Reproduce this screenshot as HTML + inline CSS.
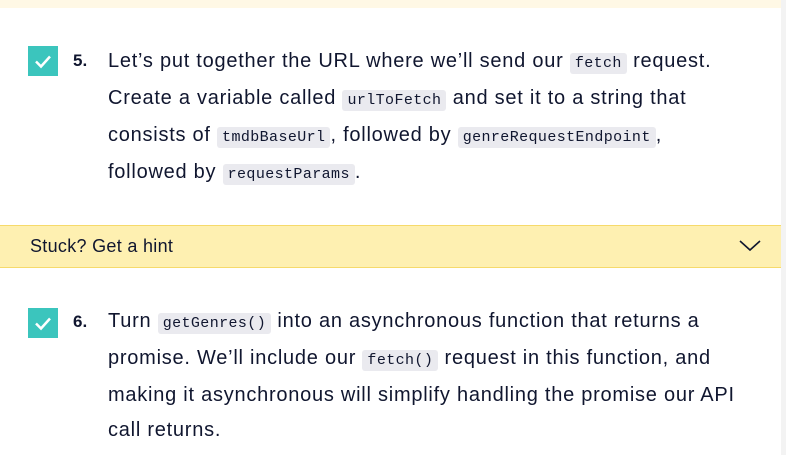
<!DOCTYPE html>
<html><head><meta charset="utf-8"><style>
*{margin:0;padding:0;box-sizing:border-box}
body{width:786px;height:455px;background:#fff;position:relative;overflow:hidden;font-family:"Liberation Sans",Arial,sans-serif;color:#10162f}
.top{position:absolute;left:0;top:0;width:781px;height:8px;background:#fff8e5}
.edge{position:absolute;right:0;top:0;width:5px;height:455px;background:#f3f3f3}
.chk{position:absolute;left:28px;width:30px;height:30px;background:#3bc5bd}
.chk svg{position:absolute;left:0;top:0}
.num{position:absolute;left:73px;font-weight:bold;font-size:17px}
.txt{position:absolute;left:108px;width:680px;font-size:20px;letter-spacing:0.75px;line-height:35px;white-space:nowrap}
code{font-family:"Liberation Mono",monospace;font-size:15px;letter-spacing:0.4px;background:#eaeaef;border-radius:3px;padding:2px 5px}
.hint{position:absolute;left:0;top:225px;width:781px;height:43px;background:#fef0b1;border-top:1px solid #f6da6b;border-bottom:1px solid #f6da6b;font-size:18px;letter-spacing:0.3px;line-height:41px;padding-left:30px}
.hint svg{position:absolute;right:20px;top:14px}
</style></head><body>
<div class="top"></div><div class="edge"></div>
<div class="chk" style="top:46px"><svg width="30" height="30"><path d="M8 15.5l5 5 9-10" stroke="#fff" stroke-width="2.5" fill="none"/></svg></div>
<div class="num" style="top:51px">5.</div>
<div class="txt" style="top:44px">Let’s put together the URL where we’ll send our <code>fetch</code> request.<br>Create a variable called <code>urlToFetch</code> and set it to a string that<br>consists of <code>tmdbBaseUrl</code>, followed by <code>genreRequestEndpoint</code>,<br>followed by <code>requestParams</code>.</div>
<div class="hint">Stuck? Get a hint<svg width="22" height="12"><path d="M1 1l10 9 10-9" stroke="#10162f" stroke-width="1.6" fill="none"/></svg></div>
<div class="chk" style="top:308px"><svg width="30" height="30"><path d="M8 15.5l5 5 9-10" stroke="#fff" stroke-width="2.5" fill="none"/></svg></div>
<div class="num" style="top:312px">6.</div>
<div class="txt" style="top:304px">Turn <code>getGenres()</code> into an asynchronous function that returns a<br>promise. We’ll include our <code>fetch()</code> request in this function, and<br>making it asynchronous will simplify handling the promise our API<br>call returns.</div>
</body></html>
